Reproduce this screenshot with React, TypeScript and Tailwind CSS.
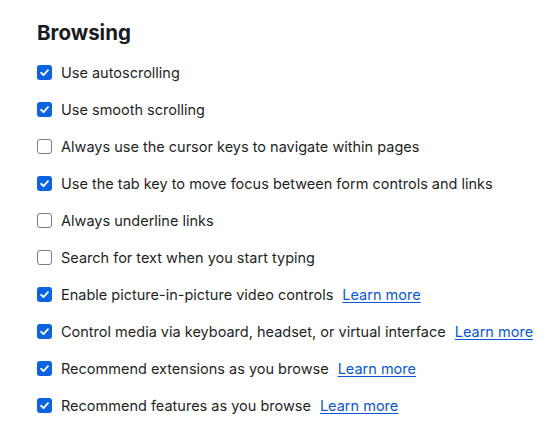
import React from "react";

const items: { label: string; checked: boolean; link?: boolean }[] = [
  { label: "Use autoscrolling", checked: true },
  { label: "Use smooth scrolling", checked: true },
  { label: "Always use the cursor keys to navigate within pages", checked: false },
  { label: "Use the tab key to move focus between form controls and links", checked: true },
  { label: "Always underline links", checked: false },
  { label: "Search for text when you start typing", checked: false },
  { label: "Enable picture-in-picture video controls", checked: true, link: true },
  { label: "Control media via keyboard, headset, or virtual interface", checked: true, link: true },
  { label: "Recommend extensions as you browse", checked: true, link: true },
  { label: "Recommend features as you browse", checked: true, link: true },
];

function Box({ checked }: { checked: boolean }) {
  if (checked) {
    return (
      <span className="flex h-[15px] w-[15px] shrink-0 items-center justify-center rounded-[3px] bg-[#0b63e0]">
        <svg width="11" height="11" viewBox="0 0 12 12" fill="none">
          <path d="M2.3 6.3 L4.9 8.8 L9.8 3.4" stroke="white" strokeWidth="2" strokeLinecap="round" strokeLinejoin="round" />
        </svg>
      </span>
    );
  }
  return <span className="h-[15px] w-[15px] shrink-0 rounded-[3px] border-[1.5px] border-[#7d7b84] bg-white" />;
}

export default function App() {
  return (
    <div className="min-h-[429px] w-[552px] bg-white pl-[37px] pt-[20px] text-[#1f1f1f]" style={{ fontFamily: "Inter, 'Noto Sans', sans-serif" }}>
      <h1 className="text-[20.5px] font-bold leading-[26px] text-[#1b1b1f]">Browsing</h1>
      <div className="mt-[8px] flex flex-col">
        {items.map((it) => (
          <div key={it.label} className="flex h-[37px] items-center">
            <Box checked={it.checked} />
            <span className="ml-[9px] text-[14.5px] leading-[18px] whitespace-nowrap">{it.label}</span>
            {it.link && (
              <a className="ml-[9px] text-[14.5px] leading-[18px] text-[#0b57d0] underline underline-offset-2 whitespace-nowrap">Learn more</a>
            )}
          </div>
        ))}
      </div>
    </div>
  );
}
